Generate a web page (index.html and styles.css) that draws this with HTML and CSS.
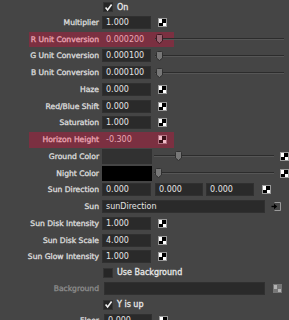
FILE: index.html
```html
<!DOCTYPE html>
<html lang="en">
<head>
  <meta charset="UTF-8" />
  <title>Attribute Editor</title>
  <link rel="stylesheet" href="styles.css">
</head>
<body>
  <div class="panel">
    <div class="row row-check first">
      <span class="lbl"></span>
      <div class="ctl"><span class="box"><svg width="9" height="9" viewBox="0 0 9 9"><path d="M1.6 4.6 L3.6 7 L7.6 1.6" fill="none" stroke="#f2f2f2" stroke-width="1.6"/></svg></span><span class="cb-text">On</span></div>
    </div>

    <div class="row">
      <span class="lbl">Multiplier</span>
      <div class="ctl"><span class="field">1.000</span><span class="map"></span></div>
    </div>
    <div class="row hl">
      <span class="lbl">R Unit Conversion</span>
      <div class="ctl"><span class="field">0.000200</span><div class="slider"><span class="thumb"></span></div></div>
    </div>
    <div class="row">
      <span class="lbl">G Unit Conversion</span>
      <div class="ctl"><span class="field">0.000100</span><div class="slider"><span class="thumb"></span></div></div>
    </div>
    <div class="row">
      <span class="lbl">B Unit Conversion</span>
      <div class="ctl"><span class="field">0.000100</span><div class="slider"><span class="thumb"></span></div></div>
    </div>
    <div class="row">
      <span class="lbl">Haze</span>
      <div class="ctl"><span class="field">0.000</span><span class="map"></span></div>
    </div>
    <div class="row">
      <span class="lbl">Red/Blue Shift</span>
      <div class="ctl"><span class="field">0.000</span><span class="map"></span></div>
    </div>
    <div class="row">
      <span class="lbl">Saturation</span>
      <div class="ctl"><span class="field">1.000</span><span class="map"></span></div>
    </div>
    <div class="row hl">
      <span class="lbl">Horizon Height</span>
      <div class="ctl"><span class="field">-0.300</span><span class="map"></span></div>
    </div>
    <div class="row">
      <span class="lbl">Ground Color</span>
      <div class="ctl"><span class="swatch ground"></span><div class="slider short"><span class="thumb" style="left: 21px"></span></div><span class="map far"></span></div>
    </div>
    <div class="row">
      <span class="lbl">Night Color</span>
      <div class="ctl"><span class="swatch night"></span><div class="slider short"><span class="thumb"></span></div><span class="map far"></span></div>
    </div>
    <div class="row">
      <span class="lbl">Sun Direction</span>
      <div class="ctl"><span class="field">0.000</span><span class="field f2">0.000</span><span class="field f3">0.000</span><span class="map m3"></span></div>
    </div>
    <div class="row">
      <span class="lbl">Sun</span>
      <div class="ctl"><span class="field wide">sunDirection</span>
        <span class="conn"><svg width="11" height="11" viewBox="0 0 11 11"><path d="M3.5 1.5 H9.5 V9.5 H3.5" fill="none" stroke="#9a9a9a" stroke-width="1"/><path d="M0.5 5.5 H3.5" stroke="#000" stroke-width="1.4"/><path d="M3 2.8 L6.2 5.5 L3 8.2 Z" fill="#000"/></svg></span>
      </div>
    </div>
    <div class="row">
      <span class="lbl">Sun Disk Intensity</span>
      <div class="ctl"><span class="field">1.000</span><span class="map"></span></div>
    </div>
    <div class="row">
      <span class="lbl">Sun Disk Scale</span>
      <div class="ctl"><span class="field">4.000</span><span class="map"></span></div>
    </div>
    <div class="row">
      <span class="lbl">Sun Glow Intensity</span>
      <div class="ctl"><span class="field">1.000</span><span class="map"></span></div>
    </div>

    <div class="row row-check">
      <span class="lbl"></span>
      <div class="ctl"><span class="box"></span><span class="cb-text">Use Background</span></div>
    </div>
    <div class="row off">
      <span class="lbl">Background</span>
      <div class="ctl"><span class="field bg"></span><span class="map grey"></span></div>
    </div>
    <div class="row row-check">
      <span class="lbl"></span>
      <div class="ctl"><span class="box"><svg width="9" height="9" viewBox="0 0 9 9"><path d="M1.6 4.6 L3.6 7 L7.6 1.6" fill="none" stroke="#f2f2f2" stroke-width="1.6"/></svg></span><span class="cb-text">Y is up</span></div>
    </div>
    <div class="row">
      <span class="lbl">Floor</span>
      <div class="ctl"><span class="field last">0.000</span><span class="map"></span></div>
    </div>
  </div>
</body>
</html>
```

FILE: styles.css
```css
html,
body {
  margin: 0;
  height: 320px;
  overflow: hidden;
  background: #454545;
}

.panel {
  width: 289px;
  font-family: "DejaVu Sans", sans-serif;
  color: #e2e2e2;
}

.row {
  position: relative;
  display: grid;
  grid-template-columns: 99px 1fr;
  column-gap: 3px;
  align-items: center;
  height: 16.75px;
}

.row-check {
  height: 15px;
}

.row-check.first {
  height: 14px;
}

.lbl {
  text-align: right;
  font-size: 7.6px;
  color: #d8d8d8;
  -webkit-text-stroke: 0.35px #d8d8d8;
  white-space: nowrap;
  position: relative;
  z-index: 1;
}

.ctl {
  display: flex;
  align-items: center;
  position: relative;
  z-index: 1;
}

.field {
  box-sizing: border-box;
  width: 49px;
  height: 13px;
  padding-left: 3px;
  background: #2a2a2a;
  border: 1px solid #303030;
  font-size: 8px;
  line-height: 11px;
  color: #e4e4e4;
  white-space: nowrap;
  overflow: hidden;
}

.field.f2 {
  margin-left: 4px;
  width: 48px;
}

.field.f3 {
  margin-left: 3px;
  width: 48px;
}

.field.wide {
  width: 163px;
}

.field.bg {
  margin-left: 2px;
  width: 161px;
}

.field.last {
  margin-left: 2px;
  width: 48px;
}

.swatch {
  width: 50px;
  height: 15px;
}

.swatch.ground {
  background: #313131;
}

.swatch.night {
  background: #000;
}

/* map button: small black/white checker */
.map {
  width: 9px;
  height: 9px;
  margin-left: 7px;
  box-sizing: border-box;
  border: 1px solid #9a9a9a;
  background:
    linear-gradient(#000, #000) right top / 4px 4px no-repeat,
    linear-gradient(#000, #000) left bottom / 4px 3px no-repeat,
    #fff;
}

.map.far {
  margin-left: 6px;
}

.map.m3 {
  margin-left: 8px;
}

.map.grey {
  margin-left: 8px;
  border-color: #777;
  background:
    linear-gradient(#777, #777) right top / 4px 4px no-repeat,
    linear-gradient(#777, #777) left bottom / 4px 3px no-repeat,
    #b4b4b4;
}

.hl .map {
  border-color: #b07080;
  background:
    linear-gradient(#3a1018, #3a1018) right top / 4px 4px no-repeat,
    linear-gradient(#3a1018, #3a1018) left bottom / 4px 3px no-repeat,
    #f2bcc8;
}

.conn {
  margin-left: 6px;
  display: flex;
}

.slider {
  position: relative;
  flex: 1;
  height: 10px;
  margin-left: 4px;
  margin-right: 5px;
}

.slider.short {
  margin-left: 2px;
  margin-right: 0;
}

.slider::before {
  content: "";
  position: absolute;
  left: 0;
  right: 0;
  top: 4px;
  height: 1px;
  background: #2c2c2c;
  border-bottom: 1px solid #565656;
}

.thumb {
  position: absolute;
  left: 1px;
  top: 0;
  width: 7px;
  height: 10px;
  background: url("data:image/svg+xml,%3Csvg xmlns='http://www.w3.org/2000/svg' width='7' height='10' viewBox='0 0 7 10'%3E%3Cpath d='M0.5 1.5 Q0.5 0.5 1.5 0.5 H5.5 Q6.5 0.5 6.5 1.5 V7 L3.5 9.5 L0.5 7 Z' fill='%23777' stroke='%23303030'/%3E%3C/svg%3E");
}

.hl .thumb {
  background: url("data:image/svg+xml,%3Csvg xmlns='http://www.w3.org/2000/svg' width='7' height='10' viewBox='0 0 7 10'%3E%3Cpath d='M0.5 1.5 Q0.5 0.5 1.5 0.5 H5.5 Q6.5 0.5 6.5 1.5 V7 L3.5 9.5 L0.5 7 Z' fill='%239a6472' stroke='%23401822'/%3E%3C/svg%3E");
}

.box {
  box-sizing: border-box;
  width: 10px;
  height: 10px;
  margin-left: 1px;
  background: #262626;
  border: 1px solid #333;
  display: flex;
  align-items: center;
  justify-content: center;
}

.box svg {
  flex: none;
}

.cb-text {
  margin-left: 4px;
  font-size: 8px;
  color: #e8e8e8;
  -webkit-text-stroke: 0.3px #e8e8e8;
}

/* highlighted (keyed) attributes */
.hl::before {
  content: "";
  position: absolute;
  left: 29px;
  width: 145px;
  top: 1px;
  bottom: 0.5px;
  background: #7b3041;
}

.hl .lbl {
  color: #e8a2b0;
  -webkit-text-stroke-color: #e8a2b0;
}

.hl .field {
  background: transparent;
  border-color: transparent;
  color: #eaa6b4;
}

.off .lbl {
  color: #8a8a8a;
  -webkit-text-stroke-color: #8a8a8a;
}
```
